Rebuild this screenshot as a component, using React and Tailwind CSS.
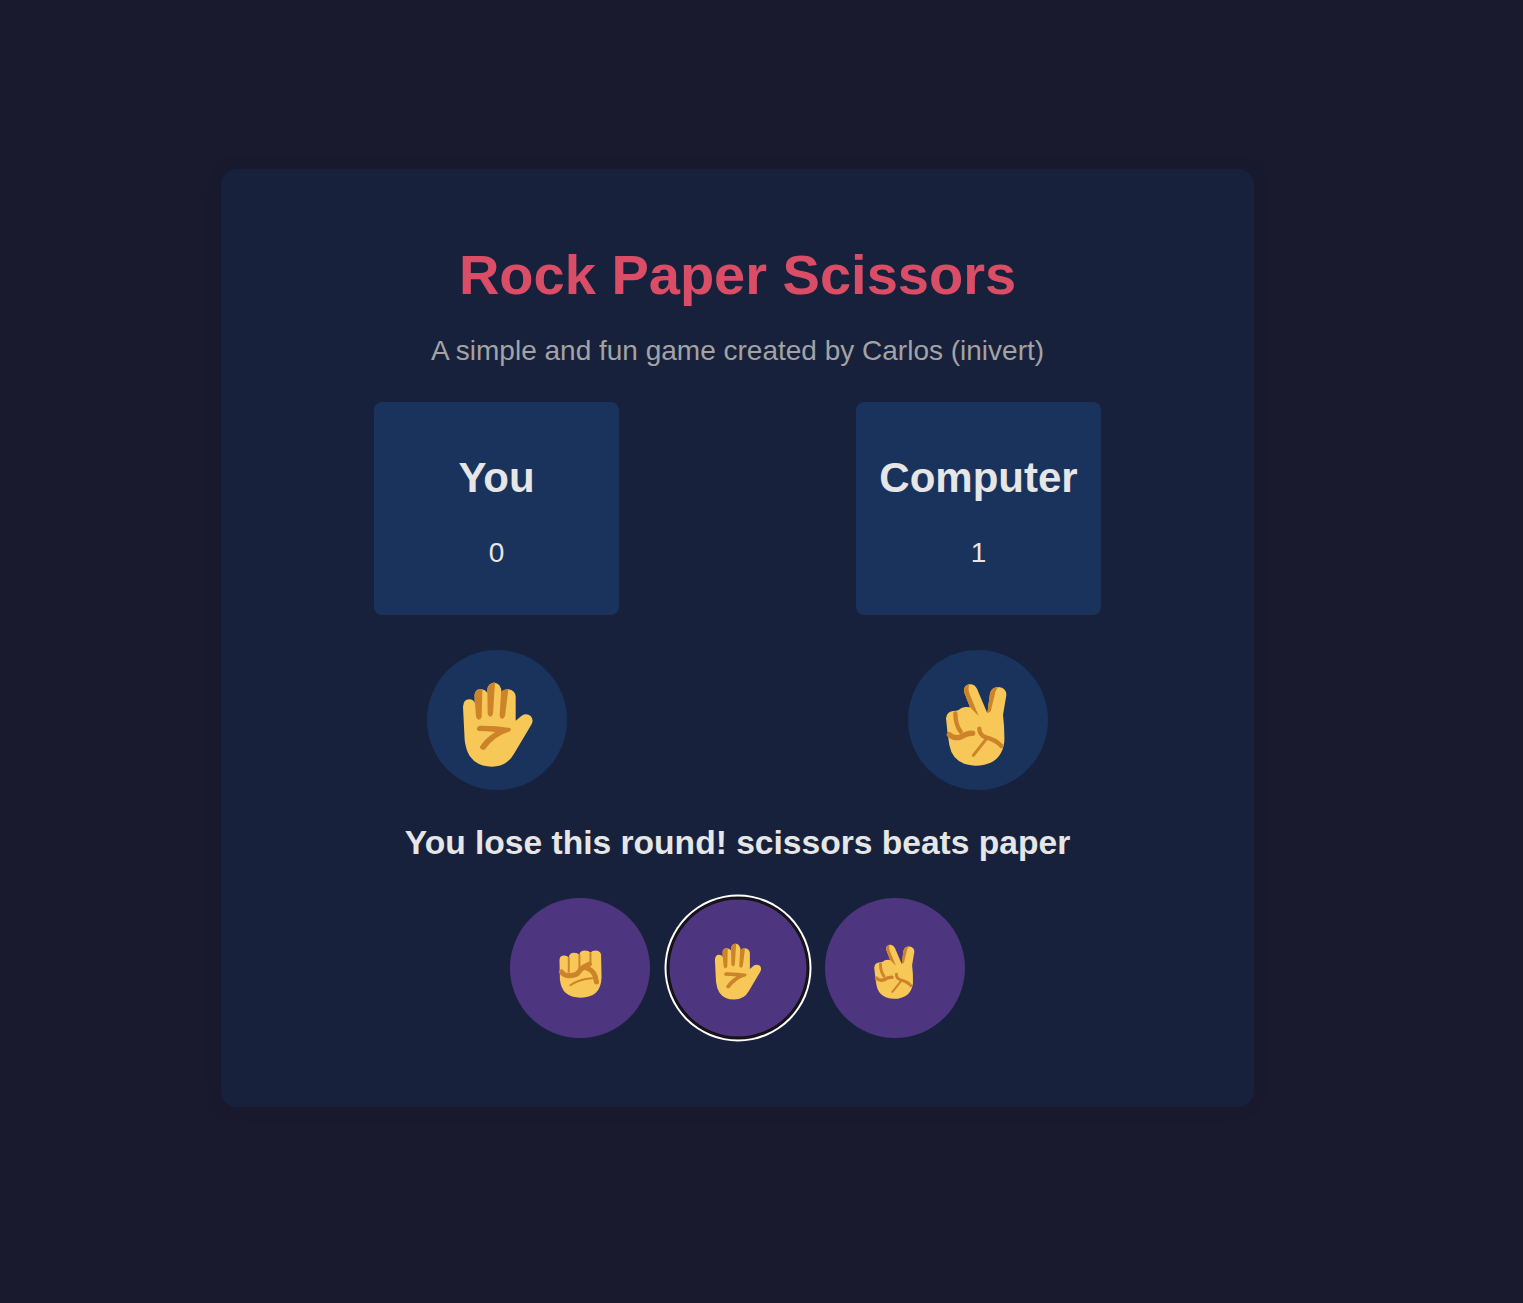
import React from 'react';

const SKIN = '#f7c858';
const DARK = '#cc8329';

function Paper({ size }) {
  return (
    <svg width={size} height={size} viewBox="0 0 420 420" className="shrink-0">
      <path
        fill={SKIN}
        d="M108 170 Q110 148 126 148 Q141 148 143 160 L143 135 Q144 118 160 118 Q176 118 181 130 L181 118 Q184 98 203 98 Q222 100 224 128 Q230 118 244 118 Q264 120 266 140 L266 212 L284 197 Q298 188 311 198 Q322 210 312 226 L262 310 Q240 350 195 350 Q150 350 128 318 Q116 298 113 270 Z"
      />
      <g fill={DARK}>
        <path d="M142 134 Q146 118 166 118 L164 200 Q160 212 152 208 Q148 206 147 198 Z" />
        <path d="M181 118 Q186 98 204 97 L198 192 Q194 202 188 200 Q183 198 182 190 Z" />
        <path d="M222 128 Q226 118 244 118 L234 198 Q230 208 223 206 Q218 204 218 196 Z" />
      </g>
      <path
        fill={DARK}
        d="M156 227 Q205 226 250 234 Q254 244 244 246 Q205 256 174 298 Q164 304 158 292 Q172 266 205 246 Q178 243 154 243 Q144 236 156 227 Z"
      />
    </svg>
  );
}

function Scissors({ size }) {
  return (
    <svg width={size} height={size} viewBox="0 0 420 420" className="shrink-0">
      <path
        fill={SKIN}
        d="M114 205 Q116 185 135 183 Q146 183 152 180 Q164 168 186 172 L168 125 Q166 108 182 103 Q198 100 207 116 L238 190 L246 130 Q252 110 272 111 Q296 114 295 136 L285 195 Q290 235 289 275 Q280 346 202 347 Q135 345 124 285 Q118 250 114 205 Z"
      />
      <path fill={DARK} d="M168 125 Q166 108 184 103 Q178 115 186 135 L212 198 L186 172 Z" />
      <path fill={DARK} d="M238 190 L246 130 Q252 110 274 111 Q262 116 260 136 L248 184 Z" />
      <g fill="none" stroke={DARK} strokeLinecap="round">
        <path strokeWidth="13" d="M142 190 Q142 225 158 245" />
        <path strokeWidth="16" d="M124 254 Q140 268 160 260 Q180 248 194 250" />
        <path strokeWidth="13" d="M214 236 Q214 255 234 262 Q262 268 280 288" />
        <path strokeWidth="9" d="M234 268 L196 316" />
      </g>
    </svg>
  );
}

function Rock({ size }) {
  return (
    <svg width={size} height={size} viewBox="0 0 420 420" className="shrink-0">
      <path
        fill={SKIN}
        d="M115 170 Q117 151 136 151 Q150 151 157 160 Q160 139 180 139 Q198 139 205 148 Q208 129 230 129 Q247 129 255 138 Q262 129 280 129 Q302 131 303 150 L305 250 Q303 342 210 342 Q125 342 117 260 Z"
      />
      <g fill="none" stroke={DARK} strokeLinecap="round">
        <path strokeWidth="9" d="M157 162 L157 225" />
        <path strokeWidth="9" d="M205 150 L205 225" />
        <path strokeWidth="9" d="M255 140 L255 182" />
        <path strokeWidth="23" d="M124 226 Q135 244 160 242 Q195 242 205 222 Q215 205 250 190" />
        <path strokeWidth="23" d="M232 206 Q266 215 276 245 L282 270" />
        <path strokeWidth="8" d="M164 286 Q202 258 262 254" />
      </g>
    </svg>
  );
}

function HandCircle({ children }) {
  return (
    <div className="w-[140px] h-[140px] rounded-full bg-[#19335d] flex items-center justify-center">
      {children}
    </div>
  );
}

function ScoreBox({ name, score }) {
  return (
    <div className="w-[245px] h-[213px] rounded-lg bg-[#19335d] flex flex-col items-center pt-[51px]">
      <h2 className="text-[42px] leading-[50px] font-bold text-[#e6e6e6]">{name}</h2>
      <p className="mt-[35px] text-[28px] leading-[30px] text-[#e6e6e6]">{score}</p>
    </div>
  );
}

function ChoiceButton({ selected, children }) {
  return (
    <button
      className={`w-[140px] h-[140px] rounded-full bg-[#4e3580] flex items-center justify-center ${
        selected ? 'shadow-[inset_0_0_0_1.5px_#111111,0_0_0_1.5px_#111111,0_0_0_3.5px_#ffffff]' : ''
      }`}
    >
      {children}
    </button>
  );
}

export default function App() {
  return (
    <div className="min-h-[1303px] bg-[#1a1a2e] pt-[169px] font-['Liberation_Sans',Arial,sans-serif]">
      <div className="ml-[221px] w-[1033px] h-[938px] rounded-2xl bg-[#17213c] shadow-[0_0_20px_rgba(0,0,0,0.06)] flex flex-col items-center pt-[71px]">
        <h1 className="text-[56px] leading-[70px] font-bold text-[#d94e66]">Rock Paper Scissors</h1>
        <p className="mt-[25px] text-[28px] leading-[31px] text-[#a3a3a3]">A simple and fun game created by Carlos (inivert)</p>

        <div className="mt-[36px] flex gap-[237px]">
          <ScoreBox name="You" score="0" />
          <ScoreBox name="Computer" score="1" />
        </div>

        <div className="mt-[35px] flex gap-[341px]">
          <HandCircle><Paper size={140} /></HandCircle>
          <HandCircle><Scissors size={140} /></HandCircle>
        </div>

        <p className="mt-[34px] text-[33.6px] leading-[38px] font-bold text-[#e6e6e6]">You lose this round! scissors beats paper</p>

        <div className="mt-[36px] flex gap-[17.5px]">
          <ChoiceButton><Rock size={93} /></ChoiceButton>
          <ChoiceButton selected><Paper size={93} /></ChoiceButton>
          <ChoiceButton><Scissors size={93} /></ChoiceButton>
        </div>
      </div>
    </div>
  );
}
